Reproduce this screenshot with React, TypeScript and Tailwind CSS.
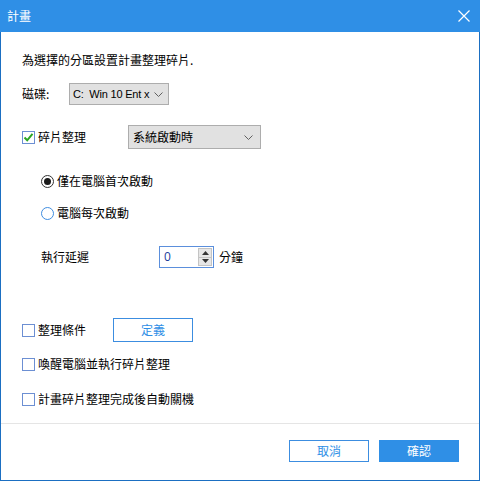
import React from "react";

const font = { fontFamily: '"Noto Sans CJK TC", "Noto Sans", sans-serif' };

const Chevron = () => (
  <svg width="9" height="5" viewBox="0 0 9 5" className="shrink-0">
    <path d="M0.5 0.5 L4.5 4.5 L8.5 0.5" fill="none" stroke="#606060" strokeWidth="1" />
  </svg>
);

const CheckBox = ({ checked = false }: { checked?: boolean }) => (
  <span className="w-[13px] h-[13px] border border-[#6c8fd3] bg-white flex items-center justify-center shrink-0">
    {checked && (
      <svg width="11" height="11" viewBox="0 0 11 11">
        <path d="M1.5 5.5 L4.2 8.3 L9.5 1.8" fill="none" stroke="#2aa523" strokeWidth="2" />
      </svg>
    )}
  </span>
);

const Radio = ({ checked = false }: { checked?: boolean }) => (
  <span
    className={
      checked
        ? "w-[13px] h-[13px] rounded-full border border-[#333333] bg-white flex items-center justify-center shrink-0"
        : "w-[13px] h-[13px] rounded-full border border-[#3f8de0] bg-white flex items-center justify-center shrink-0"
    }
  >
    {checked && <span className="w-[7px] h-[7px] rounded-full bg-[#1a1a1a]" />}
  </span>
);

export default function App() {
  return (
    <div className="w-[480px] h-[481px] flex flex-col bg-white text-[12px] text-black" style={font}>
      {/* Title bar */}
      <div className="h-[32px] bg-[#2f8fe6] flex items-center justify-between pl-[7px] pr-[10px] shrink-0">
        <span className="text-white text-[12px] leading-none">計畫</span>
        <svg width="12" height="12" viewBox="0 0 12 12">
          <path d="M0.5 0.5 L11.5 11.5 M11.5 0.5 L0.5 11.5" stroke="white" strokeWidth="1.2" />
        </svg>
      </div>

      <div className="flex-1 flex flex-col border-x border-b border-[#1b6fc2]">
        <div className="flex flex-col pl-[21px]">
          <div className="h-[20px] mt-[18px] flex items-center">為選擇的分區設置計畫整理碎片.</div>

          <div className="h-[22px] mt-[13px] flex items-center">
            <span className="w-[47px]">磁碟:</span>
            <div className="w-[100px] h-[22px] bg-[#e1e1e1] border border-[#adadad] flex items-center justify-between pl-[3px] pr-[5px]">
              <span className="whitespace-nowrap text-[11px] tracking-[-0.2px]" style={{ fontFamily: '"Liberation Sans", Arial, sans-serif' }}>
                C:&nbsp; Win 10 Ent x
              </span>
              <Chevron />
            </div>
          </div>

          <div className="h-[24px] mt-[20px] flex items-center">
            <CheckBox checked />
            <span className="ml-[3px] w-[90px]">碎片整理</span>
            <div className="w-[133px] h-[24px] bg-[#e1e1e1] border border-[#adadad] flex items-center justify-between pl-[4px] pr-[7px]">
              <span>系統啟動時</span>
              <Chevron />
            </div>
          </div>

          <div className="h-[20px] mt-[22px] ml-[19px] flex items-center">
            <Radio checked />
            <span className="ml-[3px]">僅在電腦首次啟動</span>
          </div>

          <div className="h-[20px] mt-[12px] ml-[19px] flex items-center">
            <Radio />
            <span className="ml-[3px]">電腦每次啟動</span>
          </div>

          <div className="h-[22px] mt-[23px] ml-[19px] flex items-center">
            <span className="w-[118px]">執行延遲</span>
            <div className="w-[55px] h-[22px] border border-[#5b8fdc] bg-white flex items-center pl-[4px] pr-[1px]">
              <span className="flex-1 text-[#1c3c9c]" style={{ fontFamily: '"Open Sans", sans-serif' }}>0</span>
              <div className="w-[14px] h-[18px] flex flex-col bg-[#e6e6e6] border border-[#c4c4c4]">
                <div className="flex-1 flex items-center justify-center border-b border-[#c4c4c4]">
                  <svg width="7" height="4" viewBox="0 0 7 4"><path d="M0 4 L3.5 0 L7 4 Z" fill="#333" /></svg>
                </div>
                <div className="flex-1 flex items-center justify-center">
                  <svg width="7" height="4" viewBox="0 0 7 4"><path d="M0 0 L3.5 4 L7 0 Z" fill="#333" /></svg>
                </div>
              </div>
            </div>
            <span className="ml-[5px]">分鐘</span>
          </div>

          <div className="h-[24px] mt-[50px] flex items-center">
            <CheckBox />
            <span className="ml-[3px] w-[75px]">整理條件</span>
            <button className="w-[80px] h-[24px] border border-[#3c8de0] bg-white text-[#2f8fe6] flex items-center justify-center">
              定義
            </button>
          </div>

          <div className="h-[20px] mt-[12px] flex items-center">
            <CheckBox />
            <span className="ml-[3px]">喚醒電腦並執行碎片整理</span>
          </div>

          <div className="h-[20px] mt-[15px] flex items-center">
            <CheckBox />
            <span className="ml-[3px]">計畫碎片整理完成後自動關機</span>
          </div>
        </div>

        <div className="h-px bg-[#e5e5e5] mt-[14px]" />

        <div className="flex justify-end gap-[10px] pr-[20px] mt-[16px]">
          <button className="w-[80px] h-[22px] border border-[#3c8de0] bg-white text-[#2f8fe6] flex items-center justify-center">
            取消
          </button>
          <button className="w-[80px] h-[22px] bg-[#2f8fe6] text-white flex items-center justify-center">
            確認
          </button>
        </div>
      </div>
    </div>
  );
}
